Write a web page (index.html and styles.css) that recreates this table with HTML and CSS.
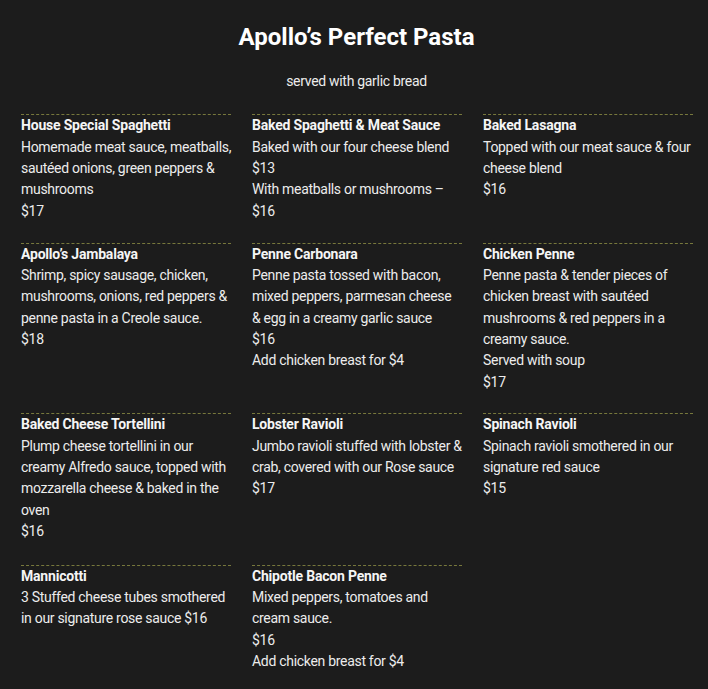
FILE: index.html
```html
<!DOCTYPE html>
<html lang="en">
<head>
<meta charset="utf-8">
<title>Apollo’s Perfect Pasta</title>
<link rel="stylesheet" href="styles.css">
</head>
<body>
<main class="menu">
  <header class="menu-head">
    <h1 class="menu-title">Apollo’s Perfect Pasta</h1>
    <p class="menu-sub">served with garlic bread</p>
  </header>
  <section class="menu-grid">
    <article class="item">
      <h2 class="item-name">House Special Spaghetti</h2>
      <p class="item-text">Homemade meat sauce, meatballs,<br>sautéed onions, green peppers &amp;<br>mushrooms</p>
      <p class="item-text">$17</p>
    </article>
    <article class="item">
      <h2 class="item-name">Baked Spaghetti &amp; Meat Sauce</h2>
      <p class="item-text">Baked with our four cheese blend</p>
      <p class="item-text">$13</p>
      <p class="item-text">With meatballs or mushrooms –<br>$16</p>
    </article>
    <article class="item">
      <h2 class="item-name">Baked Lasagna</h2>
      <p class="item-text">Topped with our meat sauce &amp; four<br>cheese blend</p>
      <p class="item-text">$16</p>
    </article>

    <article class="item">
      <h2 class="item-name">Apollo’s Jambalaya</h2>
      <p class="item-text">Shrimp, spicy sausage, chicken,<br>mushrooms, onions, red peppers &amp;<br>penne pasta in a Creole sauce.</p>
      <p class="item-text">$18</p>
    </article>
    <article class="item">
      <h2 class="item-name">Penne Carbonara</h2>
      <p class="item-text">Penne pasta tossed with bacon,<br>mixed peppers, parmesan cheese<br>&amp; egg in a creamy garlic sauce</p>
      <p class="item-text">$16</p>
      <p class="item-text">Add chicken breast for $4</p>
    </article>
    <article class="item">
      <h2 class="item-name">Chicken Penne</h2>
      <p class="item-text">Penne pasta &amp; tender pieces of<br>chicken breast with sautéed<br>mushrooms &amp; red peppers in a<br>creamy sauce.</p>
      <p class="item-text">Served with soup</p>
      <p class="item-text">$17</p>
    </article>

    <article class="item">
      <h2 class="item-name">Baked Cheese Tortellini</h2>
      <p class="item-text">Plump cheese tortellini in our<br>creamy Alfredo sauce, topped with<br>mozzarella cheese &amp; baked in the<br>oven</p>
      <p class="item-text">$16</p>
    </article>
    <article class="item">
      <h2 class="item-name">Lobster Ravioli</h2>
      <p class="item-text">Jumbo ravioli stuffed with lobster &amp;<br>crab, covered with our Rose sauce</p>
      <p class="item-text">$17</p>
    </article>
    <article class="item">
      <h2 class="item-name">Spinach Ravioli</h2>
      <p class="item-text">Spinach ravioli smothered in our<br>signature red sauce</p>
      <p class="item-text">$15</p>
    </article>

    <article class="item item--last-row">
      <h2 class="item-name">Mannicotti</h2>
      <p class="item-text">3 Stuffed cheese tubes smothered<br>in our signature rose sauce $16</p>
    </article>
    <article class="item item--last-row">
      <h2 class="item-name">Chipotle Bacon Penne</h2>
      <p class="item-text">Mixed peppers, tomatoes and<br>cream sauce.</p>
      <p class="item-text">$16</p>
      <p class="item-text">Add chicken breast for $4</p>
    </article>
  </section>
</main>
</body>
</html>
```
FILE: styles.css
```css
html, body {
  margin: 0;
  padding: 0;
  background: #1c1c1c;
}

body {
  color: #ececec;
  font-family: "Roboto", "Liberation Sans", sans-serif;
  font-size: 14px;
  line-height: 21.33px;
  letter-spacing: -0.3px;
}

.menu {
  padding: 20px 16px 0 21px;
}

.menu-head {
  text-align: center;
  width: 671px;
}

.menu-title {
  margin: 0;
  font-size: 24px;
  line-height: 34px;
  font-weight: 700;
  letter-spacing: 0;
  color: #ffffff;
}

.menu-sub {
  margin: 17px 0 0;
  color: #ececec;
}

.menu-grid {
  margin-top: 22px;
  display: grid;
  grid-template-columns: repeat(3, 210px);
  column-gap: 21px;
  row-gap: 20.6px;
}

.item {
  border-top: 1px dashed #77783c;
}

.item--last-row {
  margin-top: 1.5px;
}

.item-name {
  margin: 0;
  font-size: 14px;
  line-height: 21.33px;
  font-weight: 700;
  letter-spacing: -0.2px;
  color: #f5f5f5;
}

.item-text {
  margin: 0;
  white-space: nowrap;
}
```
